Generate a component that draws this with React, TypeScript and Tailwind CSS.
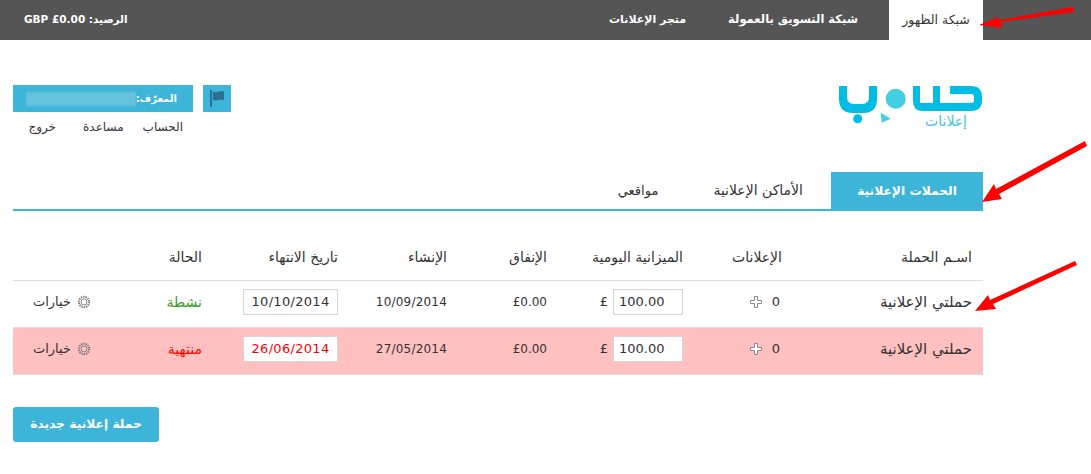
const F = "font-['DejaVu_Sans','Noto_Sans',sans-serif]";

const cols = "grid grid-cols-[190px_100px_135px_100px_110px_135px_200px] items-center";

function Plus() {
  return (
    <svg width="12" height="12" viewBox="0 0 12 12" className="mr-[9px]">
      <path d="M4.500 .5h3v4h4v3h-4v4h-3v-4h-4v-3h4z" fill="#fff" stroke="#8a8a8a" />
    </svg>
  );
}

function Gear() {
  return (
    <svg width="14" height="14" viewBox="0 0 14 14" className="ml-[6px]">
      <circle cx="7" cy="7" r="5.2" fill="none" stroke="#777" strokeWidth="2" strokeDasharray="1.4 0.9" />
      <circle cx="7" cy="7" r="3" fill="none" stroke="#888" strokeWidth="1" />
    </svg>
  );
}

function Row({ bg, date, created, dateCls, status, statusCls }: { bg: string; date: string; created: string; dateCls: string; status: string; statusCls: string }) {
  return (
    <div className={`${cols} ${bg} h-[47px] pb-[4px] border-b border-[#dddddd] text-[14px] text-[#333333]`}>
      <div className="pr-[11px] text-[15px]">حملتي الإعلانية</div>
      <div className="pr-[13px] flex items-center">
        <span className="w-[9px] text-[13px]">0</span>
        <Plus />
      </div>
      <div className="pr-[10px] flex items-center">
        <div dir="ltr" className="w-[70px] h-[26px] border border-[#d5d5d5] bg-white flex items-center pl-[5px] text-[13px]">100.00</div>
        <span className="mr-[5px] text-[13px]">£</span>
      </div>
      <div className="pr-[11px] text-[12px]">£0.00</div>
      <div className="pr-[11px] text-[12px] tracking-[0.2px]">{created}</div>
      <div className="pr-[10px]">
        <div dir="ltr" className={`w-[95px] h-[26px] border border-[#d5d5d5] bg-white flex items-center justify-center text-[13px] tracking-[0.3px] ${dateCls}`}>{date}</div>
      </div>
      <div className="flex items-center">
        <div className={`w-[122px] pr-[11px] ${statusCls}`}>{status}</div>
        <div className="flex items-center text-[13px] text-[#333333]">
          <Gear />
          <span>خيارات</span>
        </div>
      </div>
    </div>
  );
}

function Logo() {
  return (
    <div className="relative w-[146px] h-[46px]">
      <svg width="146" height="40" viewBox="-1 0 146 40" className="block">
        <path d="M1 1 H9 V12 Q9 19 16 19 H24 Q31 19 31 12 V1 H39 V14 Q39 28 25 28 H15 Q1 28 1 14 Z" fill="#00bde3" />
        <circle cx="57.700" cy="13.700" r="10" fill="#42cfe3" />
        <circle cx="19.700" cy="33.700" r="4.500" fill="#00bde3" />
        <path d="M42.700 27.700 L52.700 33.700 L43.700 37.700 Z" fill="#42cfe3" />
        <path d="M75 1 H82 V18 H95 V1 H102 V18 H133 Q136 18 136 15 V12 Q136 9 133 9 H112 V1 H133 Q144 1 144 12 V15 Q144 26 133 26 H85 Q75 26 75 16 Z" fill="#00bde3" />
      </svg>
      <div className="absolute right-[16px] top-[27px] text-[14px] leading-[18px] text-[#3fc4e0]">إعلانات</div>
    </div>
  );
}

function Arrows() {
  return (
    <svg width="1091" height="474" viewBox="0 0 1091 474" className="absolute left-0 top-0 pointer-events-none">
      <g fill="#fe0000">
        <path d="M1073 7 L1074 12 L1001 22 L1002 28 L979 25 L998 17 L999 20 Z" />
        <path d="M1085 141 L1087 146 L999 194 L1002 199 L982 202 L994 184 L996 189 Z" />
        <path d="M1075 261 L1077 265 L993 304 L996 309 L975 311 L988 295 L990 300 Z" />
      </g>
    </svg>
  );
}

export default function App() {
  return (
    <div dir="rtl" className={`${F} relative w-[1091px] h-[474px] bg-white overflow-hidden text-[#333333]`}>
      {/* top bar */}
      <div className="h-[40px] bg-[#555555] flex items-center justify-between pr-[108px] pl-[24px] text-[11px] font-bold text-white">
        <div className="flex items-center h-full">
          <div className="w-[94px] h-full bg-white flex items-center justify-center font-normal text-[12.5px] text-[#333333]">شبكة الظهور</div>
          <div className="mr-[31px] text-[11.5px]">شبكة التسويق بالعمولة</div>
          <div className="mr-[42px]">متجر الإعلانات</div>
        </div>
        <div className="text-[10.5px]">الرصيد: GBP £0.00</div>
      </div>

      {/* logo + account */}
      <div className="mt-[45px] mr-[108px] ml-[13px] flex justify-between items-start">
        <Logo />
        <div className="flex flex-col">
          <div className="flex gap-[10px]">
            <div className="w-[28px] h-[27px] bg-[#3db5d8] flex items-center justify-center">
              <svg width="15" height="17" viewBox="0 0 15 17">
                <rect x="0" y="0" width="2" height="17" fill="#2d6f8e" />
                <path d="M3 1.500 Q6 3 9 1.500 Q12 0.500 14 1.500 V10 Q11 9 8.500 10 Q6 11 3 10 Z" fill="#2d6f8e" />
              </svg>
            </div>
            <div className="w-[180px] h-[27px] bg-[#3db5d8] flex items-center pr-[16px] text-[10px] font-bold text-white">
              <span>المعرّف:</span>
              <div className="w-[110px] h-[14px] bg-[#66c3de] blur-[1px]" />
            </div>
          </div>
          <div className="flex text-[12px] leading-[14px] text-[#333333] mt-[8px] mr-[38px]">
            <span className="mr-[10px]">الحساب</span>
            <span className="mr-[19px]">مساعدة</span>
            <span className="mr-[27px]">خروج</span>
          </div>
        </div>
      </div>

      {/* tabs */}
      <div className="mt-[38px] mr-[108px] ml-[13px] flex h-[39px] border-b-2 border-[#3db5d8] items-stretch">
        <div className="w-[152px] h-[39px] bg-[#3db5d8] flex items-center justify-center font-bold text-[12.25px] text-white">الحملات الإعلانية</div>
        <div className="mr-[28px] flex items-center text-[14px]">الأماكن الإعلانية</div>
        <div className="mr-[55px] flex items-center text-[13px]">مواقعي</div>
      </div>

      {/* table */}
      <div className="mt-[24px] mr-[108px] ml-[13px]">
        <div className={`${cols} h-[46px] border-b border-[#dddddd] text-[14px] text-[#333333]`}>
          <div className="pr-[11px]">اسـم الحملة</div>
          <div className="pr-[11px]">الإعلانات</div>
          <div className="pr-[10px]">الميزانية اليومية</div>
          <div className="pr-[11px]">الإنفاق</div>
          <div className="pr-[11px]">الإنشاء</div>
          <div className="pr-[10px]">تاريخ الانتهاء</div>
          <div className="pr-[11px]">الحالة</div>
        </div>
        <Row bg="bg-white" date="10/10/2014" created="10/09/2014" dateCls="text-[#333333]" status="نشطة" statusCls="text-[#3a9a1e]" />
        <Row bg="bg-[#ffc0c0]" date="26/06/2014" created="27/05/2014" dateCls="text-[#fe0000]" status="منتهية" statusCls="text-[#fe0000]" />
      </div>

      {/* button */}
      <div className="mt-[32px] ml-[13px] mr-[932px]">
        <div className="w-[146px] h-[35px] rounded-[3px] bg-[#3db5d8] flex items-center justify-center text-[12.25px] font-bold text-white">حملة إعلانية جديدة</div>
      </div>

      <Arrows />
    </div>
  );
}
